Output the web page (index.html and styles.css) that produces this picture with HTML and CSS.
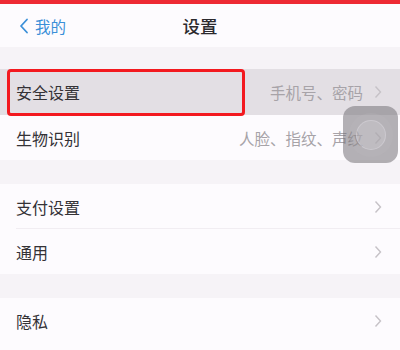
FILE: index.html
```html
<!DOCTYPE html>
<html lang="zh-CN">
<head>
<meta charset="utf-8">
<link rel="stylesheet" href="styles.css">
</head>
<body>
<div class="screen">
  <div class="status"></div>
  <header class="nav">
    <div class="back">
      <svg class="back-icon" width="10" height="16" viewBox="0 0 10 16"><polyline points="8,1.5 2,8 8,14.5" fill="none" stroke="#3a8fd8" stroke-width="1.8" stroke-linecap="round" stroke-linejoin="round"/></svg>
      <span>我的</span>
    </div>
    <div class="title">设置</div>
  </header>
  <div class="gap first"></div>
  <section class="group">
    <div class="row active">
      <span class="label">安全设置</span>
      <span class="value">手机号、密码</span>
      <svg class="chev" width="8" height="14" viewBox="0 0 8 14"><polyline points="1.5,1.5 6.5,7 1.5,12.5" fill="none" stroke="#c6c2c7" stroke-width="1.4"/></svg>
    </div>
    <div class="row">
      <span class="label">生物识别</span>
      <span class="value">人脸、指纹、声纹</span>
      <svg class="chev" width="8" height="14" viewBox="0 0 8 14"><polyline points="1.5,1.5 6.5,7 1.5,12.5" fill="none" stroke="#c6c2c7" stroke-width="1.4"/></svg>
    </div>
  </section>
  <div class="gap"></div>
  <section class="group">
    <div class="row sep">
      <span class="label">支付设置</span>
      <svg class="chev" width="8" height="14" viewBox="0 0 8 14"><polyline points="1.5,1.5 6.5,7 1.5,12.5" fill="none" stroke="#c6c2c7" stroke-width="1.4"/></svg>
    </div>
    <div class="row">
      <span class="label">通用</span>
      <svg class="chev" width="8" height="14" viewBox="0 0 8 14"><polyline points="1.5,1.5 6.5,7 1.5,12.5" fill="none" stroke="#c6c2c7" stroke-width="1.4"/></svg>
    </div>
  </section>
  <div class="gap"></div>
  <section class="group">
    <div class="row">
      <span class="label">隐私</span>
      <svg class="chev" width="8" height="14" viewBox="0 0 8 14"><polyline points="1.5,1.5 6.5,7 1.5,12.5" fill="none" stroke="#c6c2c7" stroke-width="1.4"/></svg>
    </div>
  </section>
  <div class="highlight"></div>
  <div class="assistive">
    <div class="ring"><div class="core"></div></div>
  </div>
</div>
</body>
</html>
```

FILE: styles.css
```css
* { box-sizing: border-box; margin: 0; padding: 0; }
html, body { width: 400px; height: 350px; overflow: hidden; }
body {
  background: #fdfbfe;
  font-family: "Noto Sans CJK SC", "Noto Sans", sans-serif;
  color: #333135;
}
.screen { position: relative; width: 400px; height: 350px; overflow: hidden; }
.status { height: 4px; background: #ee2a34; }
.nav {
  position: relative;
  height: 43px;
  background: #fdfbfe;
  display: flex;
  align-items: center;
  justify-content: center;
}
.back {
  position: absolute;
  left: 19px;
  top: 0;
  height: 43px;
  display: flex;
  align-items: center;
  gap: 6px;
  color: #3a8fd8;
  font-size: 15.5px;
}
.back-icon { display: block; }
.title { font-size: 17.5px; font-weight: 500; color: #2c2a2e; }
.gap { height: 24px; background: #f6f3f7; }
.gap.first { height: 22px; }
.group { background: #fdfbfe; }
.row {
  position: relative;
  height: 45px;
  display: flex;
  align-items: center;
  padding: 0 18px 0 16px;
}
.row.active { background: #e3dfe4; height: 46px; }
.row.sep::after {
  content: "";
  position: absolute;
  left: 16px;
  right: 0;
  bottom: 0;
  height: 1px;
  background: #f1edf2;
}
.label { font-size: 16px; flex: 1; color: #343236; }
.value { font-size: 15.5px; color: #a7a3a8; margin-right: 11px; }
.chev { display: block; }
.highlight {
  position: absolute;
  left: 7px;
  top: 69px;
  width: 238px;
  height: 47px;
  border: 3px solid #f3191f;
  border-radius: 4px;
}
.assistive {
  position: absolute;
  left: 343px;
  top: 106px;
  width: 55px;
  height: 57px;
  border-radius: 12px;
  background: rgba(118, 114, 120, 0.55);
  display: flex;
  align-items: center;
  justify-content: center;
}
.ring {
  width: 44px;
  height: 44px;
  border-radius: 50%;
  background: rgba(190, 186, 192, 0.22);
  display: flex;
  align-items: center;
  justify-content: center;
}
.core {
  width: 30px;
  height: 30px;
  border-radius: 50%;
  background: rgba(215, 211, 217, 0.3);
  border: 1px solid rgba(230, 226, 232, 0.35);
}
```
